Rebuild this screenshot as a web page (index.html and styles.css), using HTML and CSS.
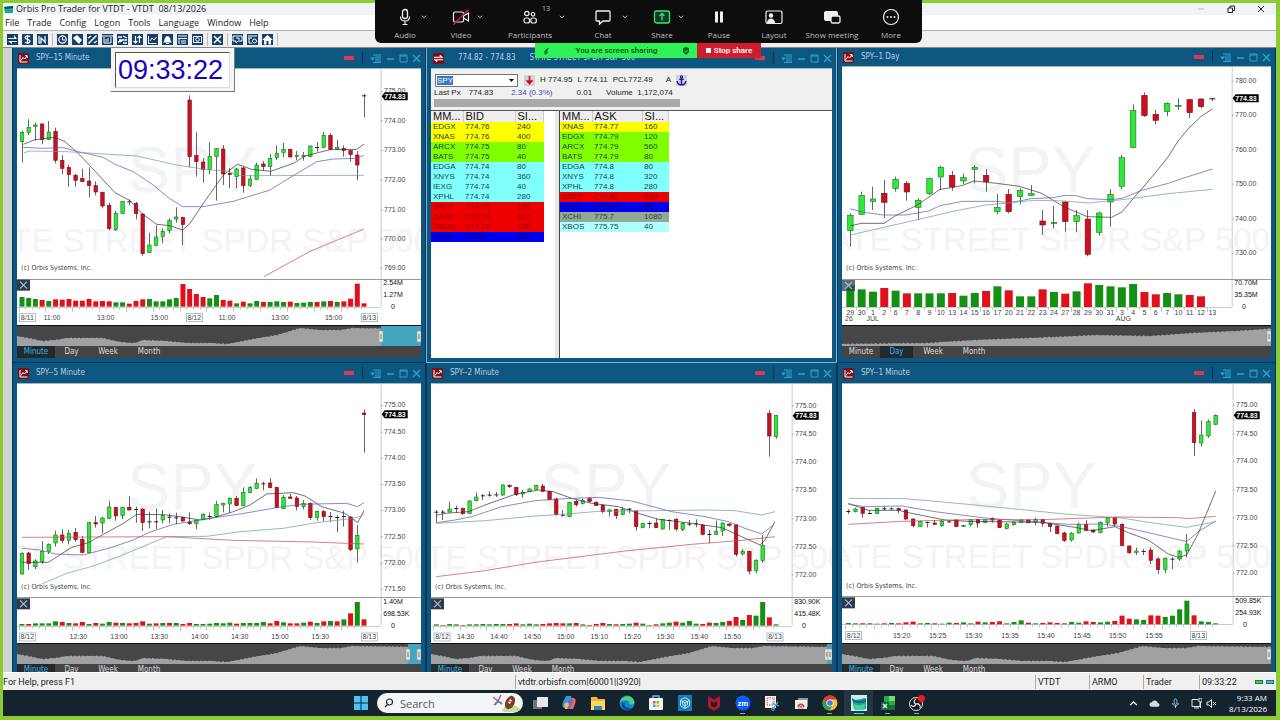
FILE: index.html
```html
<!DOCTYPE html>
<html lang="en">
<head>
<meta charset="utf-8">
<title>Orbis Pro Trader for VTDT</title>
<link rel="stylesheet" href="styles.css">
</head>
<body>
<svg class="defs" aria-hidden="true">
  <symbol id="i-chart" viewBox="0 0 11 11"><rect width="11" height="11" fill="#7c0f1c"/><path d="M2 2v7h7.500M3 7.500l2-3 1.500 1.500L9 3M7 2.700h2.200V5" fill="none" stroke="#fff" stroke-width="1"/></symbol>
  <symbol id="i-swap" viewBox="0 0 11 11"><rect width="11" height="11" fill="#7c0f1c"/><path d="M1 4h6V2l3 2.600H1zM10 7H4v2L1 6.400h9z" fill="#fff" stroke="#fff" stroke-width=".5"/></symbol>
  <symbol id="i-list" viewBox="0 0 11 9"><path d="M3 1h8M5 3h6M5 5h6M5 7h6M3 8.500h8" stroke="#2ba3cf"/><path d="M0 3.500h5L2.500 6.500z" fill="#2ba3cf"/></symbol>
  <symbol id="i-min" viewBox="0 0 9 9"><path d="M1 5h7" stroke="#2ba3cf" stroke-width="1.500"/></symbol>
  <symbol id="i-max" viewBox="0 0 9 9"><path d="M1 1h7v7H1zM1 2h7" fill="none" stroke="#2ba3cf"/></symbol>
  <symbol id="i-x" viewBox="0 0 9 9"><path d="M1 1l7 7M8 1L1 8" stroke="#2ba3cf" stroke-width="1.300"/></symbol>
  <symbol id="i-caret" viewBox="0 0 6 4"><path d="M1 .8l2 2 2-2" fill="none" stroke="#ddd"/></symbol>
</svg>

<div class="app">
  <header class="titlebar">
    <svg class="logo" viewBox="0 0 9 9"><path d="M0 2l9-1v7H1z" fill="#1aa5a0"/><path d="M0 2l9-1v2L1 4z" fill="#1b4763"/></svg>
    <h1>Orbis Pro Trader for VTDT - VTDT&nbsp; 08/13/2026</h1>
    <div class="sys">
      <button aria-label="Minimize"><svg viewBox="0 0 8 8"><path d="M1 4h6" stroke="#b8bdc0"/></svg></button>
      <button aria-label="Restore"><svg viewBox="0 0 8 8"><path d="M1 3h4.500v4.500H1zM3 3V1h4.500v4.500H5.500" fill="none" stroke="#222"/></svg></button>
      <button aria-label="Close"><svg viewBox="0 0 8 8"><path d="M1 1l6 6M7 1L1 7" stroke="#222"/></svg></button>
    </div>
  </header>
  <nav class="menu">
    <button>File</button><button>Trade</button><button>Config</button><button>Logon</button><button>Tools</button><button>Language</button><button>Window</button><button>Help</button>
  </nav>
  <div class="tools">
    <button aria-label="Swap"><svg viewBox="0 0 11 11"><path d="M1 4h6V1l3 4H1zM10 8H5v2L1 7h9z" fill="#fff"/></svg></button>
    <button aria-label="Account"><svg viewBox="0 0 11 11"><path d="M8 3C7 1.500 3 1.500 3 3.700s5 1.300 5 3.600S4 9.500 3 8M5.500 1v9" fill="none" stroke="#fff" stroke-width="1.200"/></svg></button>
    <button aria-label="Positions"><svg viewBox="0 0 11 11"><path d="M2 2v7h2V4l4 4V2M8 9h1" fill="none" stroke="#fff" stroke-width="1.200"/></svg></button>
    <i></i>
    <button aria-label="Time"><svg viewBox="0 0 11 11"><circle cx="5.500" cy="5.500" r="3.700" fill="none" stroke="#fff" stroke-width="1.300"/><path d="M5.500 3v3H8" fill="none" stroke="#fff"/></svg></button>
    <button aria-label="Orders"><svg viewBox="0 0 11 11"><path d="M1 4l4-3 5 5-3 4z" fill="#fff"/></svg></button>
    <button aria-label="Percent"><svg viewBox="0 0 11 11"><path d="M1.500 9.500l8-8M1 4l3-2M7 9l3-2" stroke="#fff" stroke-width="1.500"/></svg></button>
    <button aria-label="Board"><svg viewBox="0 0 11 11"><path d="M0 2h11M2 3v6h7V3M4 8V5M6 8V4" fill="none" stroke="#fff"/></svg></button>
    <button aria-label="Quotes"><svg viewBox="0 0 11 11"><path d="M1 3h4M6 2l4 2M2 6h8M1 8l4-1M6 9h4" stroke="#fff" stroke-width="1.300"/></svg></button>
    <button aria-label="Sort"><svg viewBox="0 0 11 11"><path d="M3.500 2v7M1.500 7l2 2 2-2M7.500 9V2M5.500 4l2-2 2 2" fill="none" stroke="#fff" stroke-width="1.200"/></svg></button>
    <button aria-label="Chart"><svg viewBox="0 0 11 11"><path d="M1.500 2v7.500h8M3 7l2-3 2 2 2.500-3" fill="none" stroke="#fff"/></svg></button>
    <button aria-label="Alerts"><svg viewBox="0 0 11 11"><path d="M1 8.500c2-1 1-6 4.500-6.500 3.500.5 2.500 5.500 4.500 6.500zM4 9h3v1H4z" fill="#fff"/></svg></button>
    <button aria-label="News"><svg viewBox="0 0 11 11"><path d="M1 2h9M1 4.500h9M2 4v6M4 7h5M4 9h5" stroke="#fff"/></svg></button>
    <button aria-label="View"><svg viewBox="0 0 11 11"><path d="M1.500 2.500h8v6h-8z" fill="none" stroke="#fff"/><circle cx="5.500" cy="5.500" r="1.800" fill="none" stroke="#fff"/></svg></button>
    <i></i>
    <button aria-label="Settings"><svg viewBox="0 0 11 11"><path d="M2 2l7 7M9 2L2 9" stroke="#fff" stroke-width="1.600"/></svg></button>
    <i></i>
    <button aria-label="Help"><svg viewBox="0 0 11 11"><path d="M1 2h9v5H6L4 9V7H1zM4 4h3v2" fill="none" stroke="#fff"/></svg></button>
    <button aria-label="Folder"><svg viewBox="0 0 11 11"><path d="M1 2h9M1 4h4M2 4v5h3" fill="none" stroke="#fff"/><circle cx="7.500" cy="7" r="2" fill="none" stroke="#fff"/></svg></button>
    <button aria-label="Home"><svg viewBox="0 0 11 11"><path d="M0 6l5.500-5L11 6H9v4.500H6.500V7h-2v3.500H2V6z" fill="#fff"/></svg></button>
    <i class="end"></i>
  </div>

  <main class="mdi">
    <section class="win" data-chart="m15"></section>

    <section class="win quote">
      <header class="wh"><svg class="wi"><use href="#i-swap"/></svg><h2>774.82 - 774.83</h2><h2 class="name">STATE STREET SPDR S&amp;P 500</h2>
        <div class="wb"><b></b><i></i><button aria-label="Options"><svg><use href="#i-list"/></svg></button><button aria-label="Minimize"><svg><use href="#i-min"/></svg></button><button aria-label="Maximize"><svg><use href="#i-max"/></svg></button><button aria-label="Close"><svg><use href="#i-x"/></svg></button></div></header>
      <div class="wbody">
        <div class="qhead">
          <div class="qrow">
            <label class="combo"><input aria-label="Symbol" value="SPY" size="3"><svg viewBox="0 0 5 3"><path d="M0 0h5L2.500 3z"/></svg></label>
            <button class="sq" aria-label="Down tick"><svg viewBox="0 0 10 10"><path d="M5 1v7M3 5.500L5 8l2-2.500z" stroke="#d01020" stroke-width="1.500" fill="#d01020"/></svg></button>
            <span>H 774.95</span><span>L 774.11</span><span>PCL772.49</span><span class="qa">A</span>
            <button class="sq" aria-label="Anchor"><svg viewBox="0 0 10 10"><path d="M5 2.500v6.500M3 4h4M1 5.500C1.500 8 3 9 5 9s3.500-1 4-3.500" fill="none" stroke="#1414b4" stroke-width="1.300"/><circle cx="5" cy="1.800" r="1" fill="none" stroke="#1414b4"/></svg></button>
          </div>
          <div class="qrow2"><span>Last Px</span><span>774.83</span><span class="chg">2.34 (0.3%)</span><span>0.01</span><span>Volume&nbsp; 1,172,074</span></div>
          <div class="qbar"></div>
        </div>
        <div class="books">
          <div class="book bidbook">
            <table>
              <thead><tr><th>MM...</th><th>BID</th><th>SI...</th></tr></thead>
              <tbody>
                <tr class="y"><td>EDGX</td><td>774.76</td><td>240</td></tr>
                <tr class="y"><td>XNAS</td><td>774.76</td><td>400</td></tr>
                <tr class="g"><td>ARCX</td><td>774.75</td><td>80</td></tr>
                <tr class="g"><td>BATS</td><td>774.75</td><td>40</td></tr>
                <tr class="c"><td>EDGA</td><td>774.74</td><td>80</td></tr>
                <tr class="c"><td>XNYS</td><td>774.74</td><td>360</td></tr>
                <tr class="c"><td>IEXG</td><td>774.74</td><td>40</td></tr>
                <tr class="c"><td>XPHL</td><td>774.74</td><td>280</td></tr>
                <tr class="r"><td>BATY</td><td>774.73</td><td>120</td></tr>
                <tr class="r"><td>XASE</td><td>774.73</td><td>120</td></tr>
                <tr class="r"><td>XBOS</td><td>774.73</td><td>120</td></tr>
                <tr class="b"><td>XCHI</td><td>773.8</td><td>360</td></tr>
              </tbody>
            </table>
          </div>
          <div class="book askbook">
            <table>
              <thead><tr><th>MM...</th><th>ASK</th><th>SI...</th></tr></thead>
              <tbody>
                <tr class="y"><td>XNAS</td><td>774.77</td><td>160</td></tr>
                <tr class="g"><td>EDGX</td><td>774.79</td><td>120</td></tr>
                <tr class="g"><td>ARCX</td><td>774.79</td><td>560</td></tr>
                <tr class="g"><td>BATS</td><td>774.79</td><td>80</td></tr>
                <tr class="c"><td>EDGA</td><td>774.8</td><td>80</td></tr>
                <tr class="c"><td>XNYS</td><td>774.8</td><td>320</td></tr>
                <tr class="c"><td>XPHL</td><td>774.8</td><td>280</td></tr>
                <tr class="r"><td>BATY</td><td>774.81</td><td>280</td></tr>
                <tr class="b"><td>IEXG</td><td>774.84</td><td>80</td></tr>
                <tr class="s"><td>XCHI</td><td>775.7</td><td>1080</td></tr>
                <tr class="p"><td>XBOS</td><td>775.75</td><td>40</td></tr>
              </tbody>
            </table>
          </div>
        </div>
      </div>
    </section>

    <section class="win short" data-chart="d1"></section>
    <section class="win low" data-chart="m5"></section>
    <section class="win low" data-chart="m2"></section>
    <section class="win low" data-chart="m1"></section>
  </main>

  <footer class="status">
    <span class="help">For Help, press F1</span><span class="host">vtdtr.orbisfn.com|60001||3920|</span><span class="f1">VTDT</span><span class="f1">ARMO</span><span class="f2">Trader</span><span class="f2">09:33:22</span><span class="leds"><i></i><i></i></span>
  </footer>

  <div class="taskbar">
    <div class="tasks">
      <button class="start" aria-label="Start"><svg viewBox="0 0 16 16"><path d="M1 1h6.500v6.500H1zM8.500 1H15v6.500H8.500zM1 8.500h6.500V15H1zM8.500 8.500H15V15H8.500z" fill="#4cc2f5"/></svg></button>
      <label class="search"><svg viewBox="0 0 10 10"><circle cx="5.500" cy="4" r="3" fill="none" stroke="#222" stroke-width="1.200"/><path d="M3.500 6.500L1 9" stroke="#222" stroke-width="1.300"/></svg><input type="search" placeholder="Search" aria-label="Search">
        <svg class="ball" viewBox="0 0 30 18"><path d="M10 17c2-6 14-9 19-1-4 2-14 3-19 1z" fill="#c7dc9c"/><path d="M1 3l5 4 3-6M6 7l-4 4M6 7l4 3" stroke="#e0527a" stroke-width="1.600" fill="none"/><path d="M3 11l3-4 4 3" stroke="#3b8fd0" stroke-width="1.500" fill="none"/><ellipse cx="18" cy="8.500" rx="4.500" ry="7" transform="rotate(25 18 8.500)" fill="#7b3f1d"/><path d="M19 5l-2 5M17 6l3 1M16 8l3 1" stroke="#fff" stroke-width=".8"/></svg></label>
      <button aria-label="Task view"><svg viewBox="0 0 16 16"><rect x="1" y="5" width="9" height="9" fill="#6d7780"/><rect x="5" y="2" width="11" height="10" fill="#e4e8ea"/></svg></button>
      <button aria-label="Copilot"><svg viewBox="0 0 16 16"><path d="M5 1h5l1 4-3 8H3c-2-1-2-3-1-6z" fill="#2a9be0"/><path d="M10 3h3c2 1 2 3 1 6l-2 5H6l3-9z" fill="#e8704d"/><path d="M7 6l4-3 1 4-3 7H6z" fill="#8c58d8"/><path d="M3 9l4-2 1 3-2 4H4z" fill="#f5bd42"/></svg></button>
      <button aria-label="Explorer"><svg viewBox="0 0 16 16"><path d="M1 2h6l1 2h7v11H1z" fill="#f2b52f"/><path d="M1 6h14v9H1z" fill="#ffd75e"/><path d="M4 11h8v4H4z" fill="#2b84cc"/></svg></button>
      <button aria-label="Edge"><svg viewBox="0 0 16 16"><circle cx="8" cy="8" r="7.500" fill="#1584d3"/><path d="M1 7C2 1 13-2 15.500 7c0 3-4 3-5 2 1-4-5-5-9.500-2z" fill="#4bd37a"/><path d="M6 7c-2 4 2 7 7 6-4 5-12 1-10-5z" fill="#0b4b9c"/></svg></button>
      <button aria-label="Store"><svg viewBox="0 0 16 16"><path d="M5 3V1h6v2" fill="none" stroke="#5fbff0" stroke-width="1.500"/><rect x="1" y="3" width="14" height="12" rx="1" fill="#f3f5f6"/><path d="M5 6h2.500v2.500H5z" fill="#e8502f"/><path d="M8.500 6H11v2.500H8.500z" fill="#7bb928"/><path d="M5 9.500h2.500V12H5z" fill="#2aa2e6"/><path d="M8.500 9.500H11V12H8.500z" fill="#f7b816"/></svg></button>
      <button aria-label="Hex app"><svg viewBox="0 0 16 16"><rect x="1" width="14" height="16" fill="#167cc0"/><path d="M8 2.500l4.500 2.700v5.400L8 13.500l-4.500-2.900V5.200zM8 5.500l2.500 1.300v2.700L8 11 5.500 9.500V6.800zM8 8v5M8 8l4-2.500M8 8L4 5.500" fill="none" stroke="#d8efff" stroke-width=".9"/></svg></button>
      <button aria-label="McAfee"><svg viewBox="0 0 16 16"><path d="M2 1l6 3.500L14 1v11l-6 4-6-4z" fill="#b5182e"/><path d="M5 6l3 2 3-2v4.500L8 12.500l-3-2z" fill="#14232e"/></svg></button>
      <button aria-label="Zoom" class="run"><svg viewBox="0 0 16 16"><circle cx="8" cy="8" r="7.500" fill="#0b5cff"/><text x="8" y="10.500" text-anchor="middle" class="zm">zm</text></svg></button>
      <button aria-label="Snip"><svg viewBox="0 0 16 16"><rect x="1" y="1" width="11" height="12" fill="#f4f4f4"/><rect x="3" y="3" width="7" height="7" fill="none" stroke="#d33" stroke-dasharray="1.500 1"/><path d="M8 8l7 3M9 14l5-7" stroke="#4aa7dd" stroke-width="1.300"/><circle cx="9" cy="14" r="1.500" fill="none" stroke="#4aa7dd"/></svg></button>
      <button aria-label="Remote"><svg viewBox="0 0 16 16"><path d="M5 3h10v9H5z" fill="#8d989f"/><path d="M2 5h12v9H2z" fill="#eee"/><path d="M4.500 12a3.500 3.500 0 0 1 7 0z" fill="#d3392b"/><path d="M4.500 12h7l-1 2h-5z" fill="#f0c23a"/><circle cx="8" cy="11.800" r="1.500" fill="#3d7fe8" stroke="#fff" stroke-width=".6"/></svg></button>
      <button aria-label="Chrome" class="run"><svg viewBox="0 0 16 16"><circle cx="8" cy="8" r="7.500" fill="#f5c22b"/><path d="M1.500 4.500A7.500 7.500 0 0 1 14.700 4.600H8L5 9z" fill="#e23b2e"/><path d="M1.500 4.500A7.500 7.500 0 0 0 7.500 15.500L11 10l-6-1z" fill="#2fa14f"/><circle cx="8" cy="8" r="3.600" fill="#fff"/><circle cx="8" cy="8" r="2.800" fill="#3d7fe8"/></svg></button>
      <button aria-label="Orbis" class="run on"><svg viewBox="0 0 16 16"><rect width="16" height="16" fill="#c8f0ec"/><path d="M1 3c4 4 9 0 14 0v11H3z" fill="#17a7a0"/><path d="M1 3c4 4 9 3 14 1v3C9 9 5 8 2 7z" fill="#1a6b86"/><path d="M3 9c4 2 8 1 11 0l-1 6H4z" fill="#46cf9b"/></svg></button>
      <button aria-label="Excel" class="run"><svg viewBox="0 0 16 16"><rect x="4" y="1" width="11" height="14" fill="#2aa84f"/><path d="M9 1h6v5H9z" fill="#6fdc6d"/><path d="M4 10h11v5H4z" fill="#13703c"/><rect x="1" y="7" width="8" height="8" fill="#0f6a37"/><path d="M3 9l4 4M7 9l-4 4" stroke="#fff" stroke-width="1.200"/></svg></button>
      <button aria-label="OBS" class="run"><svg viewBox="0 0 16 16"><circle cx="7" cy="9" r="6.500" fill="#1c1c1e" stroke="#ddd"/><path d="M7 9c-3-1-2-4 0-5M7 9c3-1 5 2 4 4M7 9c-1 3-4 3-5 1" fill="none" stroke="#ddd" stroke-width="1.300"/><circle cx="12.500" cy="3.500" r="3.500" fill="#f21a1a"/></svg></button>
    </div>
    <div class="tray">
      <svg viewBox="0 0 10 10"><path d="M2 6.500l3-3 3 3" fill="none" stroke="#fff" stroke-width="1.200"/></svg>
      <svg class="cloud" viewBox="0 0 12 10"><path d="M3 8.500a2.500 2.500 0 0 1 0-5 3.500 3.500 0 0 1 6.500 1A2 2 0 0 1 9.500 8.500z" fill="#d5dbe0"/></svg>
      <svg class="mic" viewBox="0 0 10 12"><rect x="3.500" y="1" width="3" height="6" rx="1.500" fill="none" stroke="#7cc4e8"/><path d="M2 5.500c0 4 6 4 6 0M5 8.500V11" fill="none" stroke="#cfdde5"/></svg>
      <svg class="net" viewBox="0 0 11 11"><path d="M7 1.500H1v7h8V5M3 10h5" fill="none" stroke="#e4e9ec"/><path d="M8 0h3v4H8zM9.500 4v6" stroke="#e4e9ec" fill="none"/></svg>
      <svg class="spk" viewBox="0 0 11 10"><path d="M1 3.500h2L5.500 1v8L3 6.500H1zM7 3.500l3 3M10 3.500l-3 3" fill="none" stroke="#e4e9ec"/></svg>
      <time>9:33 AM<br>8/13/2026</time>
    </div>
  </div>
</div>

<output class="clock"><span>09:33:22</span></output>

<div class="meet">
  <div class="meetbar">
    <button><svg viewBox="0 0 18 18"><rect x="6.500" y="1.500" width="5" height="9" rx="2.500" fill="none" stroke="#eee" stroke-width="1.300"/><path d="M4.500 8.500c0 6 9 6 9 0M9 13v3M6.500 16.500h5" fill="none" stroke="#eee" stroke-width="1.200"/></svg><span>Audio</span><svg class="car k1"><use href="#i-caret"/></svg></button>
    <button><svg viewBox="0 0 18 18"><rect x="1.500" y="4" width="10" height="10" rx="1.500" fill="none" stroke="#eee" stroke-width="1.200"/><path d="M11.500 8l5-3v8l-5-3" fill="none" stroke="#eee" stroke-width="1.200"/><path d="M1.500 16.500L16.500 1.500" stroke="#c41e49" stroke-width="1.700"/></svg><span>Video</span><svg class="car k1"><use href="#i-caret"/></svg></button>
    <button><svg viewBox="0 0 18 18"><g fill="none" stroke="#eee" stroke-width="1.200"><circle cx="5.800" cy="5.500" r="2.200"/><circle cx="12" cy="6.300" r="1.800"/><rect x="3" y="10" width="5.500" height="5" rx="2"/><rect x="9.800" y="10" width="5.500" height="5" rx="2"/></g></svg><span>Participants</span><sup>13</sup><svg class="car k3"><use href="#i-caret"/></svg></button>
    <button><svg viewBox="0 0 18 18"><path d="M3 3h12q1 0 1 1v8q0 1-1 1H9l-3.500 3V13H3q-1 0-1-1V4q0-1 1-1z" fill="none" stroke="#eee" stroke-width="1.300"/></svg><span>Chat</span><svg class="car k2"><use href="#i-caret"/></svg></button>
    <button><svg viewBox="0 0 18 18"><rect x="1.500" y="3" width="15" height="12" rx="2" fill="#0e3a22" stroke="#3ee07c" stroke-width="1.300"/><path d="M9 12.500v-7M6.500 8L9 5.500 11.500 8" fill="none" stroke="#3ee07c" stroke-width="1.300"/></svg><span>Share</span><svg class="car k1"><use href="#i-caret"/></svg></button>
    <button><svg viewBox="0 0 18 18"><path d="M5 3.500h3v11H5zM10 3.500h3v11h-3z" fill="#eee"/></svg><span>Pause</span></button>
    <button><svg viewBox="0 0 18 18"><rect x="1" y="3" width="16" height="12.500" rx="1.500" fill="none" stroke="#eee" stroke-width="1.200"/><circle cx="6" cy="7.500" r="2.200" fill="#eee"/><path d="M2 15c0-6 8-6 8 0z" fill="#eee"/></svg><span>Layout</span></button>
    <button><svg viewBox="0 0 18 18"><rect x="1" y="3" width="14" height="10" rx="2" fill="#eee"/><rect x="8" y="8" width="9" height="7" rx="1.500" fill="#0d0d0d" stroke="#eee" stroke-width="1.300"/></svg><span>Show meeting</span></button>
    <button><svg viewBox="0 0 18 18"><circle cx="9" cy="9" r="7.500" fill="none" stroke="#eee" stroke-width="1.200"/><circle cx="5.500" cy="9" r="1" fill="#eee"/><circle cx="9" cy="9" r="1" fill="#eee"/><circle cx="12.500" cy="9" r="1" fill="#eee"/></svg><span>More</span></button>
  </div>
  <div class="sharing">
    <p><svg viewBox="0 0 8 8"><path d="M2 8C0 4 3 1 6 1 4 3 4 5 5 6z" fill="#0b7a30"/></svg><span>You are screen sharing</span><svg viewBox="0 0 8 8"><path d="M4 0l3 1v4L4 8 1 5V1z" fill="#0b6a2a"/><path d="M2.500 4l1.200 1.200L5.800 3" fill="none" stroke="#31f158"/></svg></p>
    <button><i></i>Stop share</button>
  </div>
</div>
<script src="charts.js"></script>
</body>
</html>
```

FILE: styles.css
```css
* { box-sizing: border-box; }
html, body { height: 100%; margin: 0; }
body { background: #8ccb32; font-family: "Open Sans", "Liberation Sans", sans-serif; font-size: 9px; color: #222; overflow: hidden; }
button { border: 0; padding: 0; margin: 0; background: none; font: inherit; color: inherit; }
h1, h2, p { margin: 0; font-weight: 400; }
svg { display: block; }
.defs { position: absolute; width: 0; height: 0; }

.app { height: 100%; display: flex; flex-direction: column; padding: 3px 4px 4px 3px; }
.titlebar { display: flex; align-items: center; height: 12px; flex: none; background: #f0f4f7; padding-left: 1px; line-height: 12px; }
.logo { width: 9px; height: 9px; }
.titlebar h1 { font-size: 9px; line-height: 12px; margin-left: 3px; }
.sys { margin-left: auto; display: flex; gap: 22px; padding-right: 11px; }
.sys svg { width: 8px; height: 8px; }
.menu { display: flex; align-items: center; gap: 8px; height: 16px; flex: none; background: #fff; border-bottom: 1px solid #b4b4b4; padding-left: 2px; font-size: 9px; }
.tools { display: flex; align-items: center; gap: 4px; height: 17px; flex: none; background: #f0f0f0; border-bottom: 1px solid #888; padding-left: 4px; }
.tools button { width: 11px; height: 11px; background: #123f6e; }
.tools svg { width: 11px; height: 11px; }
.tools i { width: 1px; height: 13px; background: #bbb; }

.mdi { flex: 1; min-height: 0; overflow: hidden; display: grid; grid-template-columns: 414fr 411fr 439fr; grid-template-rows: auto auto; align-content: start; background: #0b2b4a; border-left: 9px solid #d2d4d4; }
.win { min-width: 0; background: #0d5680; border: 1px solid #0a3458; border-top: 0; padding: 0 4px 4px; display: flex; flex-direction: column; }
.quote { border-color: #7db4d0; }
.wh { display: flex; align-items: center; height: 20px; flex: none; color: #b9cfe0; font-family: "DejaVu Sans Condensed", "DejaVu Sans", sans-serif; }
.short .wh { height: 18px; }
.wi { width: 11px; height: 11px; margin: 0 7px 0 1px; }
.wh h2 { font-size: 8px; line-height: 12px; white-space: pre; }
.quote .wi { margin: 0 14px 0 2px; }
.wh .name { margin-left: 14px; }
.wb { margin-left: auto; display: flex; align-items: center; gap: 4px; }
.wb b { width: 10px; height: 4px; background: #d93a52; }
.wb i { width: 1px; height: 12px; background: #08304f; margin: 0 3px 0 4px; }
.wb svg { width: 9px; height: 9px; }
.wb button:first-of-type { margin-right: 1px; }
.wb button:first-of-type svg { width: 11px; }
.wbody { flex: 1; display: flex; flex-direction: column; min-height: 0; border-top: 1px solid #9db7c4; background: #fff; }

.plot { width: 100%; height: 256px; overflow: hidden; }
.short .plot { height: 258px; }
.low .plot { height: 259px; }
.plot text { font: 7px "Liberation Sans", Arial, sans-serif; fill: #444; }
.plot .wm1 { font-size: 65px; fill: #f3f3f3; }
.plot .wm2 { font-size: 33px; fill: #f3f3f3; }
.plot .copy { font: 7px "DejaVu Sans Condensed", sans-serif; }
.plot .cur { font-weight: 700; fill: #fff; }
.plot .vol { fill: #111; }
.nav { width: 100%; height: 21px; background: #464648; border-top: 1px solid #111; }
.tabs { display: flex; height: 12px; background: #444446; color: #dcdcdc; font: 8px/12px "DejaVu Sans Condensed", "DejaVu Sans", sans-serif; }
.tabs button { width: 38px; height: 12px; }
.tabs button:nth-child(2) { width: 33px; }
.tabs button:nth-child(3) { width: 40px; }
.tabs button:last-child { width: 42px; }
.tabs button[aria-selected="true"] { background: #24292e; color: #35b2e4; }

.qhead { height: 42px; background: #f0f0f0; border-bottom: 1px solid #555; padding: 4px 3px 0; font: 8px/10px "Liberation Sans", Arial, sans-serif; }
.qrow { display: flex; align-items: center; gap: 5px; height: 14px; padding-left: 1px; }
.combo { display: flex; align-items: center; width: 83px; height: 13px; background: #fff; border: 1px solid #777; margin-right: 1px; padding: 0 3px 0 1px; }
.combo input { flex: 1; min-width: 0; border: 0; padding: 0; background: linear-gradient(90deg, #3a78c4 16px, #fff 16px); color: #fff; font: 8px/9px "Liberation Sans", sans-serif; height: 9px; }
.combo svg { width: 5px; height: 3px; }
.sq { width: 11px; height: 11px; background: #d2d2d2; }
.qa { margin-left: 8px; }
.qrow2 { display: flex; height: 12px; align-items: center; gap: 8px; }
.qrow2 .chg { color: #4848b8; margin: 0 16px 0 10px; }
.qrow2 span:last-child { margin-left: 6px; }
.qbar { width: 246px; height: 8px; background: #a8a8a8; }
.books { display: flex; flex: 1; }
.book { flex: 1; }
.bidbook { flex: none; width: 128px; border-right: 4px solid #e6e6e6; }
.askbook { border-left: 1px solid #444; }
.book table { border-collapse: collapse; table-layout: fixed; width: 113px; font: 8px/10px "Liberation Sans", Arial, sans-serif; color: #244; }
.book th, .book td { padding: 0 0 0 2px; height: 10px; text-align: left; font-weight: 400; white-space: nowrap; overflow: hidden; }
.book th { font-size: 11px; line-height: 11px; height: 11px; background: #eee; border-right: 1px solid #ccc; color: #111; }
.book th:first-child { width: 32px; }
.book th:nth-child(2) { width: 52px; }
.askbook table { width: 109px; }
.askbook th:nth-child(2) { width: 50px; }
.y { background: #ffff00; }
.g { background: #80ff00; }
.c { background: #80ffff; }
.p { background: #b0ffff; }
.s { background: #94a896; }
.r { background: #ee0000; color: #900; }
.b { background: #0000ee; color: #000080; }

.status { display: flex; flex: none; height: 18px; padding: 2px 1px 1px 0; background: #f0f0f0; border-top: 1px solid #fff; font: 9px/14px Roboto, "Open Sans", sans-serif; }
.status span { border-left: 1px solid #aaa; padding-left: 2px; white-space: nowrap; }
.status .help { width: 512px; border: 0; padding: 0; }
.status .host { flex: 1; }
.status .f1 { width: 54px; }
.status .f2 { width: 56px; }
.status .leds { display: flex; align-items: center; gap: 3px; border: 0; width: 20px; padding: 0; }
.leds i { width: 8px; height: 4px; background: #35d04c; border: 1px solid #257a35; }
.leds i + i { background: #3fb8e8; border-color: #256a8a; }

.taskbar { display: flex; flex: none; height: 26px; background: #14242f; align-items: center; padding-left: 348px; }
.tasks { display: flex; align-items: center; }
.tasks > button { width: 29px; height: 26px; display: grid; place-items: center; border-bottom: 2px solid transparent; border-top: 2px solid transparent; }
.tasks > button svg { width: 16px; height: 16px; }
.tasks .start { width: 19px; margin-right: 7px; }
.tasks .run { background: linear-gradient(#9aa5ad, #9aa5ad) center bottom / 5px 1px no-repeat; }
.tasks .on { background: linear-gradient(#5fc8f0, #5fc8f0) center bottom / 10px 1px no-repeat, #233642; }
.zm { font: 700 7px "Open Sans", sans-serif; fill: #fff; }
.search { display: flex; align-items: center; width: 146px; height: 20px; border-radius: 10px; background: #f3f6f8; padding: 0 1px 0 7px; margin-right: 2px; overflow: hidden; }
.search svg { width: 10px; height: 10px; flex: none; }
.search input { flex: 1; min-width: 0; border: 0; background: none; font: 11px "Open Sans", sans-serif; padding: 0 0 0 6px; outline: 0; }
.search input::placeholder { color: #555; }
.search .ball { width: 30px; height: 18px; }
.tray { margin-left: auto; display: flex; align-items: center; gap: 10px; color: #fff; padding-right: 9px; }
.tray svg { width: 11px; height: 11px; }
.tray .net { margin-right: -6px; }
.tray time { font-size: 8px; line-height: 11px; text-align: right; margin-left: 2px; }

.clock { position: absolute; left: 111px; top: 48px; background: #f5f5f5; padding: 4px 4px 3px; border-right: 1px solid #777; border-bottom: 1px solid #777; }
.clock span { display: block; padding: 0 6px 0 2px; background: #fff; border: 1px solid #555; border-right-color: #ddd; border-bottom-color: #ddd; font: 27px/34px "Liberation Sans", Arial, sans-serif; color: #1a00c4; }

.meet { position: absolute; left: 375px; top: 0; width: 547px; }
.meetbar { height: 43px; background: #0d0d0d; border-radius: 0 0 6px 6px; padding: 0 5px 0 2px; display: grid; grid-template-columns: 56fr 56fr 82fr 64fr 54fr 60fr 50fr 66fr 52fr; color: #bdbdbd; }
.meetbar button { position: relative; display: flex; flex-direction: column; align-items: center; padding-top: 8px; gap: 2px; font-size: 8px; line-height: 14px; white-space: nowrap; }
.meetbar button > svg:first-child { width: 18px; height: 18px; }
.meetbar .car { position: absolute; top: 15px; width: 6px; height: 4px; }
.k1 { left: calc(50% + 16px); }
.k2 { left: calc(50% + 19px); }
.k3 { left: calc(50% + 29px); }
.meetbar sup { position: absolute; top: 4px; left: calc(50% + 12px); font-size: 7px; line-height: 10px; }
.sharing { display: flex; width: 226px; margin-left: 160px; height: 15px; font: 600 8px/15px Roboto, "Open Sans", sans-serif; }
.sharing p { width: 162px; display: flex; justify-content: space-between; align-items: center; padding: 0 7px 0 8px; background: #31f158; color: #0a5a24; font-weight: 600; }
.sharing svg { width: 8px; height: 8px; }
.sharing button { flex: 1; display: flex; align-items: center; justify-content: center; gap: 3px; background: #d01c2c; color: #fff; }
.sharing i { width: 5px; height: 5px; background: #fff; }
```

FILE: charts.js
```js
// Chart coordinates are stored in thirds of a pixel; each chart's origin is its top-left corner.
const CH = {
m15: { title: "SPY--15 Minute", w: 404, o: [51, -33], x0: 66, x1: 1092, cw: 4, mid: 175, ax: 1142, wy: [335, 515], copy: 571, sep: 596, base: 680, ty: 713, cur: 49,
 pr: "33:775.00 121:774.00 210:773.00 299:772.00 388:771.00 475:770.00 563:769.00", vl: "609:2.54M 645:1.27M 680:0",
 tl: "82:8/11 156:11:00 317:13:00 478:15:00 583:8/12 681:11:00 840:13:00 1001:15:00 1108:8/13", sel: 364,
 c: "g152,157,185,248 g118,142,157,165 g128,135,140,182 r130,132,179,193 g123,156,179,180 r143,154,241,250 r226,241,265,283 r254,262,284,320 r282,286,301,320 r266,296,305,306 r262,303,317,352 r304,317,336,346 r335,337,378,385 r368,376,446,451 g392,400,449,453 g363,364,401,402 k358,364,368,376 r366,370,401,418 r400,402,521,527 g458,495,518,520 g436,471,496,497 g445,455,469,490 g415,421,452,460 g382,411,417,428 r410,412,434,495 r46,60,230,262 r157,227,245,290 r234,246,268,308 g186,229,268,283 g205,206,230,362 r195,207,282,315 r264,280,284,325 g264,267,290,325 r260,264,317,338 g285,297,317,321 g248,255,298,300 r243,252,260,272 g222,235,260,288 g196,220,233,240 g188,208,218,232 r206,208,231,232 g213,226,230,240 g216,226,230,242 g196,198,229,232 k186,201,203,215 g156,166,202,204 r160,166,208,210 g180,203,207,210 r196,205,211,230 r210,212,224,245 r213,225,255,300 k42,46,49,112",
 v: "651 654 657 660 663 658 659 657 662 662 657 664 663 664 667 667 671 663 658 657 664 664 658 654 612 627 642 651 655 645 660 662 670 665 670 663 666 666 664 666 665 669 668 666 666 664 663 666 664 656 611 670",
 l: ["70,193 105,179 165,172 195,185 230,215 280,268 345,338 392,363 425,400 470,433 510,437 548,450 570,430 610,370 670,285 712,253 755,268 812,274 880,250 915,228 990,209 1070,208 1092,192", "70,202 125,205 190,203 235,215 310,232 345,253 400,275 460,315 508,355 548,380 610,380 700,364 810,330 850,305 900,275 950,245 1000,237 1070,235 1092,226", "72,218 90,213 200,215 410,228 530,255 630,270 680,273 720,287 1092,286", "792,590 930,514 1092,447"] },
d1: { title: "SPY--1 Day", w: 429, o: [21, 66], x0: 46, x1: 1132, cw: 6, mid: 188, ax: 1190, wy: [440, 618], copy: 676, sep: 702, base: 786, ty: 802, cur: 160, tab: 1,
 pr: "107:780.00 209:770.00 313:760.00 416:750.00 521:740.00 623:730.00", vl: "714:70.70M 750:35.35M 786:0", days: "29 30 1 2 6 7 8 9 10 13 14 15 16 17 20 21 22 23 24 27 28 29 30 31 3 4 5 6 7 10 11 12 13", months: "42:26 113:JUL 865:AUG", sel: 429,
 c: "g505,511,557,605 g440,451,508,510 g425,462,469,495 r405,445,472,520 g395,403,431,440 r408,415,441,467 g460,466,487,525 g398,400,446,450 g362,367,396,435 r378,391,426,437 g386,398,408,418 g360,367,374,415 r372,391,410,440 g447,487,500,508 r432,448,500,505 g430,436,455,478 g420,445,452,453 r495,528,540,570 g483,532,535,550 r468,471,530,560 g495,512,530,562 r495,522,628,634 g500,504,562,572 g432,448,471,545 g330,338,424,432 g178,196,307,309 r142,151,212,216 r195,208,226,238 g172,175,200,214 g160,181,184,195 r162,164,203,220 r160,162,185,190 k158,160,162,168",
 v: "722 733 740 729 737 745 745 745 745 744 752 744 738 724 736 754 754 733 741 746 739 715 720 724 727 717 741 748 744 748 750 754 786",
 l: ["46,543 78,535 147,535 180,513 247,480 315,433 350,428 383,421 417,408 485,415 553,424 620,445 690,487 757,515 830,517 862,500 895,460 930,420 962,382 1000,335 1029,288 1063,248 1097,215 1132,192", "46,491 80,501 145,510 213,510 281,498 315,482 383,469 485,469 519,473 553,468 588,461 655,458 690,451 723,452 757,461 826,464 862,460 920,436 1000,415 1040,401 1132,372", "46,570 247,524 350,500 450,480 519,474 600,466 690,468 760,474 862,464 1000,446 1132,433"] },
m5: { title: "SPY--5 Minute", w: 404, o: [51, 72], x0: 66, x1: 1092, cw: 4, mid: 175, ax: 1142, wy: [447, 627], copy: 687, sep: 712, base: 797, ty: 831, cur: 163,
 pr: "135:775.00 215:774.50 293:774.00 372:773.50 450:773.00 529:772.50 608:772.00 686:771.50", vl: "726:1.40M 761:698.53K 797:0",
 tl: "82:8/12 235:12:30 357:13:00 478:13:30 599:14:00 719:14:30 840:15:00 961:15:30 1108:8/13", sel: 391,
 c: "g577,580,642,644 r575,579,611,630 g598,603,620,628 g543,574,604,612 g550,553,575,582 g512,525,549,560 r508,525,541,550 g510,520,541,553 r504,517,539,545 r528,538,577,580 g486,488,578,579 r468,488,492,503 g470,474,489,520 g422,441,475,477 r440,442,468,482 g440,443,467,477 r408,442,450,451 k440,447,450,488 r445,447,488,513 K455,484,487,505 k446,484,487,507 g450,466,480,490 k460,470,473,490 K458,472,474,492 r470,473,483,485 r457,486,491,495 g478,481,491,508 g460,464,479,481 K457,468,471,480 g422,434,469,473 g428,430,435,457 g412,415,432,458 r408,415,437,438 g382,397,437,439 g378,383,398,400 g355,370,385,387 K365,370,373,391 r354,369,383,384 r380,382,442,443 g405,412,446,448 r402,411,415,416 r408,414,440,451 g420,430,440,448 r427,430,473,480 g452,455,473,482 r450,455,470,484 K456,468,472,486 k466,471,474,517 K452,468,471,500 r468,471,569,573 g495,526,567,608 r148,159,164,278",
 v: "792 792 790 790 790 784 786 789 790 786 792 789 791 786 788 789 790 789 784 791 790 789 789 789 792 789 792 792 791 789 790 788 791 789 789 789 786 790 783 787 790 790 788 785 789 784 783 784 778 760 726 778",
 l: ["66,607 145,607 215,562 265,548 370,490 410,463 490,464 540,470 600,480 640,473 700,455 750,435 800,402 880,398 915,408 965,440 1035,460 1073,488 1092,452", "66,565 120,570 165,582 250,585 335,562 400,540 445,518 520,493 630,475 720,462 830,443 900,433 1040,430 1073,440 1092,428", "125,672 200,640 280,618 360,588 500,530 620,529 720,515 850,505 950,488 1060,475 1085,468 1092,460", "66,532 500,530 700,541 940,546 1092,552"] },
m2: { title: "SPY--2 Minute", w: 401, o: [18, 72], x0: 34, x1: 1053, cw: 4, mid: 175, ax: 1100, wy: [447, 627], copy: 687, sep: 712, base: 797, ty: 831, cur: 167,
 pr: "136:775.00 221:774.50 305:774.00 388:773.50 475:773.00 559:772.50 643:772.00", vl: "726:830.90K 761:415.48K 797:0",
 tl: "51:8/12 122:14:30 222:14:40 322:14:50 422:15:00 523:15:10 622:15:20 721:15:30 823:15:40 922:15:50 1050:8/13", sel: 396,
 c: "K450,455,458,488 k450,455,457,480 g425,447,456,458 K437,444,446,458 r443,446,461,465 g420,423,460,462 g398,411,422,424 K402,406,408,420 K394,404,406,410 K396,403,405,411 g372,375,405,407 r373,376,380,384 r380,383,404,408 g390,397,402,413 g385,387,394,396 g374,377,388,389 r372,378,394,396 r392,394,419,421 r413,417,464,467 k450,464,467,470 g425,427,470,472 r420,424,434,440 g416,421,430,433 r412,416,424,426 r424,427,437,438 r432,436,455,460 g446,450,455,470 r446,448,467,477 g440,449,464,466 K444,446,448,460 r450,453,500,512 g488,490,503,505 K484,489,491,505 r475,489,503,504 g476,478,507,509 K478,480,482,510 r474,478,507,513 g486,490,509,513 K480,491,493,498 K478,490,492,502 r492,495,523,526 k510,522,524,550 g482,514,523,524 g486,489,513,528 r490,492,496,500 r492,495,583,590 g567,574,582,587 r572,574,633,643 g598,602,631,640 g525,556,602,608 r150,160,228,290 g165,166,230,236",
 v: "793 795 792 793 795 793 793 792 793 792 792 792 790 793 791 793 792 790 789 790 790 789 793 795 792 789 792 793 792 791 788 791 795 793 790 788 785 788 783 791 792 788 789 786 783 771 780 765 767 726 772 793",
 l: ["34,466 60,460 130,455 180,435 270,403 340,390 385,395 440,415 500,430 580,440 640,460 700,478 800,490 890,503 950,530 1005,555 1020,540 1050,485", "34,488 90,480 140,470 230,440 330,422 420,416 520,412 620,423 740,455 840,470 910,485 960,505 1010,522 1045,495", "34,490 180,482 330,468 430,462 530,453 700,452 850,450 930,452 1010,465 1050,455", "34,650 180,632 330,607 600,573 800,553 950,541 1050,530"] },
m1: { title: "SPY--1 Minute", w: 429, o: [21, 72], x0: 40, x1: 1142, cw: 4, mid: 189, ax: 1193, wy: [444, 624], copy: 683, sep: 709, base: 793, ty: 827, cur: 166,
 pr: "135:775.00 220:774.50 303:774.00 388:773.50 472:773.00 556:772.50 639:772.00", vl: "721:509.85K 757:254.93K 793:0",
 tl: "56:8/12 200:15:20 308:15:25 416:15:30 525:15:35 633:15:40 741:15:45 848:15:50 957:15:55 1090:8/13", sel: 429,
 c: "K448,453,455,462 g443,447,455,457 r441,443,460,473 k450,459,461,463 g443,445,461,462 k438,445,447,450 K442,445,446,448 r443,446,450,460 r448,450,477,481 r475,477,497,502 g482,485,499,500 K484,486,488,502 r480,489,493,495 g480,484,497,501 K480,484,486,488 r478,480,500,501 g494,496,499,501 g477,479,494,500 r476,478,489,503 g477,479,488,490 r472,476,480,488 r478,481,503,504 g488,492,506,508 g484,487,494,497 g477,480,488,489 r478,480,488,490 g473,479,488,496 r476,479,490,500 r488,491,500,516 r496,498,521,522 r515,519,541,546 g516,520,540,545 g488,494,519,521 r480,494,511,513 r508,510,516,518 g484,487,517,519 g471,474,489,500 r470,472,492,500 r490,493,557,558 r556,558,578,582 g563,573,577,585 K567,573,575,585 r562,570,601,612 r592,597,629,642 g592,595,628,640 K592,596,598,628 g570,573,597,602 g522,552,573,592 r147,158,248,288 g182,225,249,260 g178,184,228,234 g163,166,193,195",
 v: "789 790 790 790 791 790 789 790 787 785 790 789 790 791 788 789 787 790 785 787 786 784 790 786 781 788 790 789 787 789 790 786 788 784 786 787 785 783 767 776 778 780 766 767 771 767 748 722 766 784 786 790",
 l: ["40,430 100,451 190,451 230,460 330,480 400,484 480,485 620,487 720,502 770,512 840,500 880,518 940,540 1000,582 1030,592 1055,585 1090,520 1142,393", "40,433 90,440 200,438 300,455 450,474 620,487 700,493 800,492 860,500 940,518 1055,545 1090,515 1142,483", "40,415 210,416 400,433 700,463 860,474 940,487 1055,502 1142,485", "40,493 200,484 400,479 620,479 850,471 1030,473 1060,476 1142,469"] }
};
const NAV = "0,10 16,13 25,15 38,14 50,12 86,12 103,16 118,17 126,14 150,15 170,17 196,17 210,18 236,13 260,9 270,6 283,2 303,4 323,4 336,2 404,3";
const NAVDAY = "0,18 80,17 125,14 200,11 240,9 290,10 330,7 370,5 400,3 404,2";
const LINES = ["#333", "#5757b0", "#6f9a9a", "#c4475c"];

function plot(d, width) {
  const s = width / d.w, X = v => (v - d.o[0]) / 3 * s, Y = v => (v - d.o[1]) / 3;
  const out = [];
  const text = (x, y, t, cls, a) => out.push(`<text x="${X(x)}" y="${Y(y)}" class="${cls}" text-anchor="${a || "start"}">${t}</text>`);
  const rect = (x, y, w, h, f, extra) => out.push(`<rect x="${x}" y="${y}" width="${w}" height="${h}" fill="${f}" ${extra || ""}/>`);
  const pairs = str => str.split(" ").map(p => [+p.slice(0, p.indexOf(":")), p.slice(p.indexOf(":") + 1)]);
  const mid = d.mid * s;
  out.push(`<text x="${mid}" y="${Y(d.wy[0])}" class="wm1" text-anchor="middle">SPY</text><text x="${mid}" y="${Y(d.wy[1])}" class="wm2" text-anchor="middle">STATE STREET SPDR S&amp;P 500</text>`);
  text(d.o[0] + 12, d.copy, "(c) Orbis Systems, Inc.", "copy");
  rect(X(d.ax), 0, 1, Y(d.base), "#ccc");
  rect(0, Math.round(Y(d.sep)), width, 1, "#9a9a9a");
  rect(0, Math.round(Y(d.base)), X(d.ax), 1, "#ccc");
  const cs = d.c.split(" "), vs = d.v.split(" "), step = (d.x1 - d.x0) / (cs.length - 1);
  cs.forEach((c, i) => {
    const k = c[0], [hi, top, bot, lo] = c.slice(1).split(",").map(Number), x = X(d.x0 + i * step), w = d.cw;
    const up = k === "g" || k === "K";
    rect(Math.round(x - 0.5), Y(hi), 1, (lo - hi) / 3, "#666");
    if (k === "g" || k === "r") rect(x - w / 2 + 0.25, Y(top), w - 0.5, Math.max(1, (bot - top) / 3), up ? "#2fe83a" : "#cc1020", `stroke="${up ? "#147a1c" : "#7c0c16"}" stroke-width="0.6"`);
    else rect(x - w / 2, Y(top), w, 1, "#222");
    const vw = w === 6 ? 8 : 5;
    rect(x - vw / 2, Y(+vs[i]), vw, (d.base - vs[i]) / 3, up ? "#149014" : "#e0101c");
    if (!d.days || i) rect(Math.round(x - step * s / 6), Y(d.base), 1, i % 4 ? 3 : 5, "#c4c4c4");
  });
  d.l.forEach((l, i) => out.push(`<polyline points="${l.split(" ").map(p => { const q = p.split(","); return X(+q[0]) + "," + Y(+q[1]); }).join(" ")}" fill="none" stroke="${LINES[i]}" stroke-width="0.7"/>`));
  pairs(d.pr).forEach(([y, t]) => { text(d.ax + 10, y + 7, t, ""); rect(X(d.ax), Y(y), 2, 1, "#aaa"); });
  const cy = Y(d.cur), cx = X(d.ax) + 1;
  out.push(`<path d="M${cx} ${cy}l3-4h23v8h-23z" fill="#000"/>`);
  text(d.ax + 11, d.cur + 7, "774.83", "cur");
  pairs(d.vl).forEach(([y, t]) => t === "0" ? text(d.ax + 37, y + 7, t, "vol", "middle") : text(d.ax + 8, y + 7, t, "vol"));
  if (d.days) {
    d.days.split(" ").forEach((t, i) => text(d.x0 + i * step, d.ty + 7, t, "", "middle"));
    pairs(d.months).forEach(([x, t]) => text(x, 827, t, "", "middle"));
  } else pairs(d.tl).forEach(([x, t]) => {
    text(x, d.ty + 7, t, "", "middle");
    if (t.includes("/")) rect(X(x) - 8, Y(d.ty) - 4, 16, 8, "none", 'stroke="#7fa9bd" stroke-width="0.7"');
  });
  out.push(`<rect x="0" y="${Y(d.sep) + 1}" width="13" height="11" fill="#2f3a44" opacity="${d.days ? 0.75 : 1}"/><path d="M3 ${Y(d.sep) + 3}l7 7m0-7l-7 7" stroke="#8fc6e8" stroke-width="1.2"/>`);
  return out.join("");
}

function nav(d, width) {
  const s = width / 404, pts = (d.days ? NAVDAY : NAV).split(" ").map(p => p.split(",").map(Number));
  let path = `M0 21`;
  for (let i = 0; i < pts.length - 1; i++) {
    const [a, b] = pts[i], [c, e] = pts[i + 1];
    for (let x = a; x < c; x += 2) path += `L${x * s} ${b + (e - b) * (x - a) / (c - a) + Math.sin(x * 1.7) * 0.6}`;
  }
  path += `L${width} 3V21z`;
  const sx = d.sel / d.w * width;
  let out = `<path d="${path}" fill="#9fa1a3"/>`;
  if (d.sel < d.w) out += `<rect x="${sx}" width="${width - sx}" height="21" fill="#45a4c0"/>`;
  [Math.min(sx, width - 2), width - 2].forEach(x => out += `<rect x="${x - 2}" y="5" width="4" height="11" rx="1" fill="#e6e6dc" stroke="#999" stroke-width="0.5"/><path d="M${x} 8v5" stroke="#777"/>`);
  return out;
}

document.querySelectorAll("[data-chart]").forEach(el => {
  const d = CH[el.dataset.chart];
  el.innerHTML = `<header class="wh"><svg class="wi"><use href="#i-chart"/></svg><h2>${d.title}</h2><div class="wb"><b></b><i></i>` +
    [["Options", "list"], ["Minimize", "min"], ["Maximize", "max"], ["Close", "x"]].map(([n, i]) => `<button aria-label="${n}"><svg><use href="#i-${i}"/></svg></button>`).join("") +
    `</div></header><div class="wbody"><svg class="plot" role="img" aria-label="${d.title}"></svg><svg class="nav"></svg><div class="tabs" role="tablist">` +
    ["Minute", "Day", "Week", "Month"].map((t, i) => `<button role="tab" aria-selected="${i === (d.tab || 0)}">${t}</button>`).join("") + `</div></div>`;
});
function draw() {
  document.querySelectorAll("[data-chart]").forEach(el => {
    const d = CH[el.dataset.chart], p = el.querySelector(".plot"), w = p.getBoundingClientRect().width;
    p.innerHTML = plot(d, w);
    el.querySelector(".nav").innerHTML = nav(d, w);
  });
}
draw();
addEventListener("resize", draw);
```
